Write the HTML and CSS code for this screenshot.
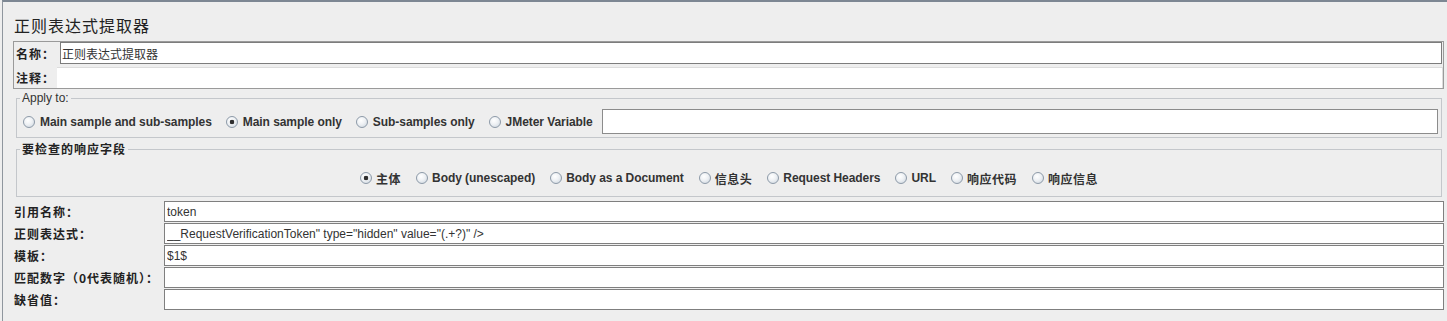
FILE: index.html
```html
<!DOCTYPE html>
<html lang="zh-CN">

<head>
    <meta charset="UTF-8">
    <meta name="viewport" content="width=device-width, initial-scale=1.0">
    <title>正则表达式提取器</title>
    <link rel="stylesheet" href="styles.css">
</head>

<body>
    <div class="frame">
        <h1 class="title">正则表达式提取器</h1>

        <div class="name-panel">
            <div class="name-row">
                <label class="zh-label" for="name">名称：</label>
                <input type="text" id="name" class="name-input" value="正则表达式提取器">
            </div>
            <div class="name-row comment-row">
                <label class="zh-label" for="comment">注释：</label>
                <input type="text" id="comment" class="comment-input">
            </div>
        </div>

        <fieldset class="group apply-group">
            <legend class="legend-plain">Apply to:</legend>
            <div class="apply-row">
                <span class="radio"><span class="dot"></span>Main sample and sub-samples</span>
                <span class="radio"><span class="dot checked"></span>Main sample only</span>
                <span class="radio"><span class="dot"></span>Sub-samples only</span>
                <span class="radio"><span class="dot"></span>JMeter Variable</span>
                <input type="text" class="var-input">
            </div>
        </fieldset>

        <fieldset class="group field-group">
            <legend class="legend-bold">要检查的响应字段</legend>
            <div class="field-row">
                <span class="radio"><span class="dot checked"></span><span class="zh">主体</span></span>
                <span class="radio"><span class="dot"></span>Body (unescaped)</span>
                <span class="radio"><span class="dot"></span>Body as a Document</span>
                <span class="radio"><span class="dot"></span><span class="zh">信息头</span></span>
                <span class="radio"><span class="dot"></span>Request Headers</span>
                <span class="radio"><span class="dot"></span>URL</span>
                <span class="radio"><span class="dot"></span><span class="zh">响应代码</span></span>
                <span class="radio"><span class="dot"></span><span class="zh">响应信息</span></span>
            </div>
        </fieldset>

        <div class="form-rows">
            <div class="form-row">
                <label class="zh-label">引用名称：</label>
                <input type="text" class="field" value="token">
            </div>
            <div class="form-row">
                <label class="zh-label">正则表达式：</label>
                <input type="text" class="field" value="__RequestVerificationToken&quot; type=&quot;hidden&quot; value=&quot;(.+?)&quot; />">
            </div>
            <div class="form-row">
                <label class="zh-label">模板：</label>
                <input type="text" class="field" value="$1$">
            </div>
            <div class="form-row">
                <label class="zh-label">匹配数字（0代表随机）：</label>
                <input type="text" class="field">
            </div>
            <div class="form-row">
                <label class="zh-label">缺省值：</label>
                <input type="text" class="field">
            </div>
        </div>
    </div>
</body>

</html>
```

FILE: styles.css
```css
* {
    box-sizing: border-box;
}

body {
    margin: 0;
    background-color: #eeeeee;
    color: #333333;
    font-family: "Liberation Sans", "Noto Sans CJK SC", sans-serif;
    font-size: 12px;
}

.frame {
    margin-left: 2px;
    min-height: 321px;
    border-left: 1px solid #8f969e;
    border-top: 2px solid #7d8793;
}

.title {
    margin: 13px 0 0 11px;
    font-size: 16px;
    font-weight: normal;
    line-height: 20px;
    letter-spacing: 1px;
    font-family: "Noto Sans CJK SC", sans-serif;
    color: #222;
}

.zh-label {
    font-family: "Noto Sans CJK SC", sans-serif;
    font-weight: bold;
    letter-spacing: 1px;
    color: #222;
}

.zh {
    font-family: "Noto Sans CJK SC", sans-serif;
    letter-spacing: 1px;
}

input[type="text"] {
    font-family: "Liberation Sans", "Noto Sans CJK SC", sans-serif;
    font-size: 12px;
    color: #333;
    background-color: #ffffff;
    border: 1px solid #8a8a8a;
    outline: none;
    margin: 0;
}

/* name / comment */
.name-panel {
    margin: 6px 3px 0 10px;
    border: 1px solid #9a9a9a;
    padding-left: 2px;
}

.name-row {
    display: flex;
    align-items: center;
    height: 22px;
}

.name-input {
    flex: 1;
    height: 22px;
    margin-left: 5px !important;
    margin-right: 1px !important;
    padding: 0 1px;
    border-color: #7c7c7c !important;
}

.comment-row {
    height: 21px;
    margin-top: 3px;
}

.comment-input {
    flex: 1;
    height: 21px;
    margin-left: 2px !important;
    border: 1px solid #dcdcdc !important;
    border-left: none !important;
    border-bottom: none !important;
}

/* titled groups */
.group {
    margin: 2px 5px 0 13px;
    padding: 4px 3px 3px 6px;
    border: 1px solid #c4c7cb;
    min-width: 0;
}

.group legend {
    margin-left: -3px;
    padding: 0 2px;
    line-height: 14px;
}

.legend-plain {
    color: #333;
}

.legend-bold {
    font-family: "Noto Sans CJK SC", sans-serif;
    font-weight: bold;
    letter-spacing: 1px;
    color: #222;
}

.field-group {
    margin-top: 4px;
    padding: 14px 6px 10px 6px;
}

.apply-row {
    display: flex;
    align-items: center;
    gap: 14px;
    height: 25px;
}

.apply-row .radio {
    gap: 5px;
}

.field-row {
    display: flex;
    align-items: center;
    justify-content: center;
    gap: 15px;
    height: 16px;
}

.radio {
    display: flex;
    align-items: center;
    gap: 4px;
    font-weight: bold;
    letter-spacing: -0.06px;
    white-space: nowrap;
    color: #333;
}

.radio .zh {
    letter-spacing: 0.5px;
}

.dot {
    width: 12px;
    height: 12px;
    border-radius: 50%;
    border: 1px solid #8d9aa8;
    background: radial-gradient(circle at 40% 35%, #ffffff 0%, #eef1f4 45%, #c9d2dc 100%);
    flex-shrink: 0;
}

.dot.checked {
    background: radial-gradient(circle at 50% 50%, #2e2e2e 0, #2e2e2e 2px, transparent 2.6px),
        radial-gradient(circle at 40% 35%, #ffffff 0%, #eef1f4 45%, #c9d2dc 100%);
}

.var-input {
    flex: 1;
    height: 25px;
    margin-left: -5px !important;
    border-color: #8c8c8c !important;
}

/* extractor fields */
.form-rows {
    margin: 4px 3px 0 11px;
    display: flex;
    flex-direction: column;
    gap: 1px;
}

.form-row {
    display: flex;
    align-items: center;
    height: 21px;
}

.form-row .zh-label {
    width: 150px;
    flex-shrink: 0;
    white-space: nowrap;
}

.field {
    flex: 1;
    height: 21px;
    padding: 0 2px;
    border-color: #7f7f7f !important;
}
```
